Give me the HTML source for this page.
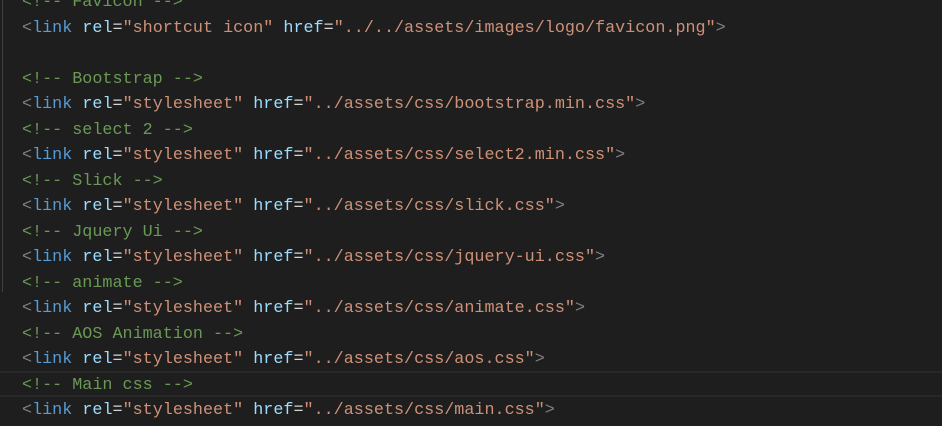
<!DOCTYPE html>
<html><head><meta charset="utf-8"><style>
html,body{margin:0;padding:0;background:#1e1e1e;width:942px;height:426px;overflow:hidden}
.ed{position:absolute;left:0;top:-9.75px;font-family:"Liberation Mono",monospace;font-size:16.75px;line-height:25.5px;color:#d4d4d4}
.l{height:25.5px;padding-left:22px;white-space:pre}
.c{color:#6a9955}.t{color:#569cd6}.p{color:#808080}.a{color:#9cdcfe}.s{color:#ce9178}
.guide{position:absolute;left:2px;top:0;width:1px;height:292px;background:#404040}
.hl{position:absolute;left:0;top:371px;width:942px;height:22px;border-top:2px solid #282828;border-bottom:2px solid #282828}
</style></head><body>
<div class="guide"></div>
<div class="hl"></div>
<div class="ed"><div class="l"><span class="c">&lt;!-- Favicon --&gt;</span></div><div class="l"><span class="p">&lt;</span><span class="t">link</span> <span class="a">rel</span>=<span class="s">"shortcut icon"</span> <span class="a">href</span>=<span class="s">"../../assets/images/logo/favicon.png"</span><span class="p">&gt;</span></div><div class="l"></div><div class="l"><span class="c">&lt;!-- Bootstrap --&gt;</span></div><div class="l"><span class="p">&lt;</span><span class="t">link</span> <span class="a">rel</span>=<span class="s">"stylesheet"</span> <span class="a">href</span>=<span class="s">"../assets/css/bootstrap.min.css"</span><span class="p">&gt;</span></div><div class="l"><span class="c">&lt;!-- select 2 --&gt;</span></div><div class="l"><span class="p">&lt;</span><span class="t">link</span> <span class="a">rel</span>=<span class="s">"stylesheet"</span> <span class="a">href</span>=<span class="s">"../assets/css/select2.min.css"</span><span class="p">&gt;</span></div><div class="l"><span class="c">&lt;!-- Slick --&gt;</span></div><div class="l"><span class="p">&lt;</span><span class="t">link</span> <span class="a">rel</span>=<span class="s">"stylesheet"</span> <span class="a">href</span>=<span class="s">"../assets/css/slick.css"</span><span class="p">&gt;</span></div><div class="l"><span class="c">&lt;!-- Jquery Ui --&gt;</span></div><div class="l"><span class="p">&lt;</span><span class="t">link</span> <span class="a">rel</span>=<span class="s">"stylesheet"</span> <span class="a">href</span>=<span class="s">"../assets/css/jquery-ui.css"</span><span class="p">&gt;</span></div><div class="l"><span class="c">&lt;!-- animate --&gt;</span></div><div class="l"><span class="p">&lt;</span><span class="t">link</span> <span class="a">rel</span>=<span class="s">"stylesheet"</span> <span class="a">href</span>=<span class="s">"../assets/css/animate.css"</span><span class="p">&gt;</span></div><div class="l"><span class="c">&lt;!-- AOS Animation --&gt;</span></div><div class="l"><span class="p">&lt;</span><span class="t">link</span> <span class="a">rel</span>=<span class="s">"stylesheet"</span> <span class="a">href</span>=<span class="s">"../assets/css/aos.css"</span><span class="p">&gt;</span></div><div class="l"><span class="c">&lt;!-- Main css --&gt;</span></div><div class="l"><span class="p">&lt;</span><span class="t">link</span> <span class="a">rel</span>=<span class="s">"stylesheet"</span> <span class="a">href</span>=<span class="s">"../assets/css/main.css"</span><span class="p">&gt;</span></div></div>
</body></html>
